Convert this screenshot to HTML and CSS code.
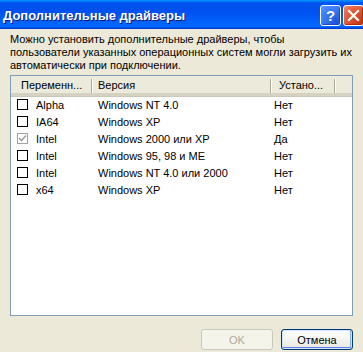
FILE: index.html
```html
<!DOCTYPE html>
<html lang="ru">
<head>
<meta charset="utf-8">
<title>Дополнительные драйверы</title>
<link rel="stylesheet" href="styles.css">
</head>
<body>
<div class="window">
  <div class="titlebar">
    <span class="title">Дополнительные драйверы</span>
    <div class="tb-buttons">
      <span class="tb-btn help">?</span>
      <span class="tb-btn close">
        <svg width="13" height="13" viewBox="0 0 13 13"><path d="M2 2 L11 11 M11 2 L2 11" stroke="#fff" stroke-width="2.2" stroke-linecap="square"/></svg>
      </span>
    </div>
  </div>
  <div class="content">
    <p class="intro">Можно установить дополнительные драйверы, чтобы<br>пользователи указанных операционных систем могли загрузить их<br>автоматически при подключении.</p>
    <div class="list">
      <div class="header">
        <div class="hcell c1">Переменн...</div>
        <div class="hcell c2">Версия</div>
        <div class="hcell c3">Устано...</div>
        <div class="hcell c4"></div>
      </div>
      <div class="row"><div class="cell c1"><span class="cb"></span>Alpha</div><div class="cell c2">Windows NT 4.0</div><div class="cell c3">Нет</div></div>
      <div class="row"><div class="cell c1"><span class="cb"></span>IA64</div><div class="cell c2">Windows XP</div><div class="cell c3">Нет</div></div>
      <div class="row"><div class="cell c1"><span class="cb checked"><svg width="9" height="9" viewBox="0 0 9 9"><path d="M1 4 L3.5 6.5 L8 1.5" stroke="#a0a0a0" stroke-width="1.6" fill="none"/></svg></span>Intel</div><div class="cell c2">Windows 2000 или XP</div><div class="cell c3">Да</div></div>
      <div class="row"><div class="cell c1"><span class="cb"></span>Intel</div><div class="cell c2">Windows 95, 98 и ME</div><div class="cell c3">Нет</div></div>
      <div class="row"><div class="cell c1"><span class="cb"></span>Intel</div><div class="cell c2">Windows NT 4.0 или 2000</div><div class="cell c3">Нет</div></div>
      <div class="row"><div class="cell c1"><span class="cb"></span>x64</div><div class="cell c2">Windows XP</div><div class="cell c3">Нет</div></div>
    </div>
    <div class="buttons">
      <button class="btn disabled" disabled>OK</button>
      <button class="btn default">Отмена</button>
    </div>
  </div>
</div>
</body>
</html>
```

FILE: styles.css
```css
html, body {
  margin: 0;
  padding: 0;
  background: #ECE9D8;
}
body {
  width: 363px;
  height: 352px;
  overflow: hidden;
  font-family: "Liberation Sans", Arial, sans-serif;
  font-size: 11px;
  color: #000;
}
.window {
  display: flex;
  flex-direction: column;
}
.titlebar {
  height: 29px;
  display: flex;
  align-items: center;
  justify-content: space-between;
  padding-left: 3px;
  background: linear-gradient(to bottom, #0997FF 0px, #0053EE 3px, #0050EE 10px, #0066FF 25px, #0066FF 27px, #003DD7 28px, #003DD7 29px);
}
.title {
  color: #fff;
  font-family: "Liberation Sans", Arial, sans-serif;
  font-weight: bold;
  font-size: 13px;
  letter-spacing: 0;
  text-shadow: 1px 1px 0 #0A1883;
  padding-top: 1px;
}
.tb-buttons {
  display: flex;
  gap: 2px;
  margin-right: -1px;
  padding-top: 2px;
}
.tb-btn {
  width: 19px;
  height: 19px;
  border: 1px solid #fff;
  border-radius: 3px;
  display: flex;
  align-items: center;
  justify-content: center;
  color: #fff;
  font-weight: bold;
  font-size: 15px;
  font-family: "Liberation Sans", Arial, sans-serif;
}
.help {
  background: radial-gradient(circle at 80% 85%, #1F54D8 0, #3C7BF5 60%, #5A93FF 100%);
  box-shadow: inset -1px -1px 1px #1A47C2;
}
.close {
  background: radial-gradient(circle at 80% 85%, #C6391A 0, #E25B36 60%, #F08A6E 100%);
  box-shadow: inset -1px -1px 1px #B02A10;
}
.content {
  padding: 4px 10px 0 10px;
  display: flex;
  flex-direction: column;
}
.intro {
  margin: 0;
  line-height: 13px;
  height: 39px;
  white-space: nowrap;
}
.list {
  margin-top: 3px;
  height: 239px;
  border: 1px solid #7F9DB9;
  background: #fff;
}
.header {
  height: 17px;
  display: grid;
  grid-template-columns: 81px 179px 64px 1fr;
  background: #EBEADB;
  border-bottom: 3px solid #D6D2C2;
  box-shadow: 0 1px 0 #CBC7B8;
}
.hcell {
  position: relative;
  line-height: 18px;
  white-space: nowrap;
}
.hcell.c1 { padding-left: 10px; }
.hcell.c2 { padding-left: 6px; }
.hcell.c3 { padding-left: 8px; }
.hcell.c1::after,
.hcell.c2::after,
.hcell.c3::after {
  content: "";
  position: absolute;
  right: 0;
  top: 3px;
  height: 14px;
  width: 1px;
  background: #ACA899;
  box-shadow: 1px 0 0 #fff;
}
.row {
  height: 17px;
  display: grid;
  grid-template-columns: 81px 179px 64px 1fr;
  align-items: center;
}
.cell {
  white-space: nowrap;
  display: flex;
  align-items: center;
}
.cell.c1 { padding-left: 6px; }
.cell.c2 { padding-left: 6px; }
.cell.c3 { padding-left: 3px; }
.cb {
  width: 9px;
  height: 9px;
  border: 1px solid #000;
  background: #fff;
  margin-right: 8px;
  display: flex;
  align-items: center;
  justify-content: center;
}
.cb.checked {
  border-color: #a0a0a0;
}
.buttons {
  display: flex;
  justify-content: flex-end;
  gap: 8px;
  margin-top: 13px;
}
.btn {
  width: 72px;
  height: 21px;
  border-radius: 3px;
  font-family: "Liberation Sans", Arial, sans-serif;
  font-size: 11px;
  padding: 0;
  border: 1px solid #003C74;
  background: linear-gradient(to bottom, #FFFFFF 0, #F4F4F0 50%, #ECEBE6 85%, #D6D0C5 100%);
  color: #000;
}
.btn.disabled {
  border-color: #C9C7BA;
  background: #F5F4EA;
  color: #ACA899;
}
.btn.default {
  box-shadow: inset 0 0 0 1px #CEE7FF, inset 0 -1px 0 1px #6982EE, inset -1px 0 0 1px #89ADE4;
}
```
